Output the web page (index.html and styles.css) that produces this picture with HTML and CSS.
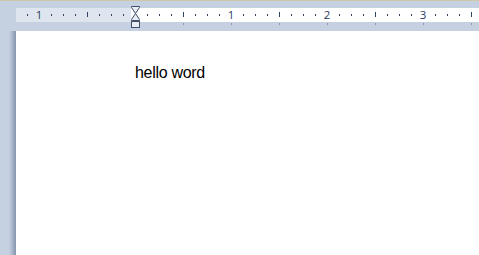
FILE: index.html
```
<!DOCTYPE html>
<html lang="en">
<head>
    <meta charset="UTF-8">
    <title>Document</title>
    <link rel="stylesheet" href="styles.css">
</head>
<body>
    <div class="top-line"></div>
    <div class="ruler-area">
        <div class="ruler" id="ruler">
            <div class="ruler-margin"></div>
            <div class="indent">
                <svg width="11" height="23" viewBox="0 0 11 23">
                    <path d="M1.5 0.5 H9.5 V1.5 L5.5 7.5 L1.5 1.5 Z" fill="#e8edf5" stroke="#404e68"/>
                    <path d="M5.5 7.5 L9.5 13.5 V14.5 H1.5 V13.5 Z" fill="#e8edf5" stroke="#404e68"/>
                    <rect x="1.5" y="15.5" width="8" height="6" fill="#e8edf5" stroke="#404e68"/>
                </svg>
            </div>
        </div>
        <div class="tabs" id="tabs"></div>
    </div>
    <div class="workspace">
        <div class="side"></div>
        <div class="page">
            <p class="text">hello word</p>
        </div>
    </div>

    <script>
        const ruler = document.getElementById('ruler');
        const tabs = document.getElementById('tabs');
        const zero = 119; // indent position inside ruler (page x = 135)
        const inch = 96;
        const step = inch / 8;

        for (let i = -9; i <= 28; i++) {
            const x = zero + i * step;
            if (x < 4 || x > 462 || i === 0) continue;
            const mark = document.createElement('div');
            if (i % 8 === 0) {
                mark.className = 'num';
                mark.textContent = Math.abs(i / 8);
            } else if (i % 4 === 0) {
                mark.className = 'tick long';
            } else {
                mark.className = 'tick';
            }
            mark.style.left = x + 'px';
            ruler.appendChild(mark);
        }

        for (let i = 1; i <= 7; i++) {
            const tab = document.createElement('div');
            tab.className = 'tab';
            tab.style.left = (135 + i * 48) + 'px';
            tabs.appendChild(tab);
        }
    </script>
</body>
</html>
```

FILE: styles.css
```
body {
    margin: 0;
    width: 479px;
    height: 255px;
    overflow: hidden;
    background: #c5d0e1;
    font-family: "Liberation Sans", Arial, sans-serif;
}

.top-line {
    height: 1px;
    background: #cfc8a8;
}

.ruler-area {
    position: relative;
    height: 30px;
    padding-top: 7px;
    box-sizing: border-box;
}

.ruler {
    position: relative;
    margin-left: 16px;
    height: 14px;
    background: #fff;
}

.ruler-margin {
    position: absolute;
    left: 0;
    top: 0;
    width: 115px;
    height: 100%;
    background: #dfe5ee;
}

.tick {
    position: absolute;
    top: 6px;
    width: 1px;
    height: 2px;
    background: #34445f;
}

.tick.long {
    top: 4px;
    height: 5px;
}

.num {
    position: absolute;
    top: 0;
    transform: translateX(-50%);
    font-family: "Open Sans", sans-serif;
    font-size: 11.5px;
    line-height: 14px;
    color: #2c3d5f;
}

.indent {
    position: absolute;
    left: 114px;
    top: -2px;
    z-index: 2;
}

.indent svg {
    display: block;
}

.tabs {
    position: relative;
    height: 9px;
}

.tab {
    position: absolute;
    top: 1px;
    width: 1px;
    height: 2px;
    background: #8d99ad;
}

.workspace {
    display: flex;
    height: 224px;
}

.side {
    width: 16px;
    background: linear-gradient(to right, #c5d0e1 0, #c5d0e1 9px, #b4c0d2 11px, #a3b0c5 13px, #8c9ab0 15px, #8c9ab0 16px);
}

.page {
    flex: 1;
    background: #fff;
    padding-left: 119px;
}

.text {
    margin: 33px 0 0;
    font-size: 16px;
    letter-spacing: -0.3px;
    line-height: 18px;
    color: #000;
}
```
